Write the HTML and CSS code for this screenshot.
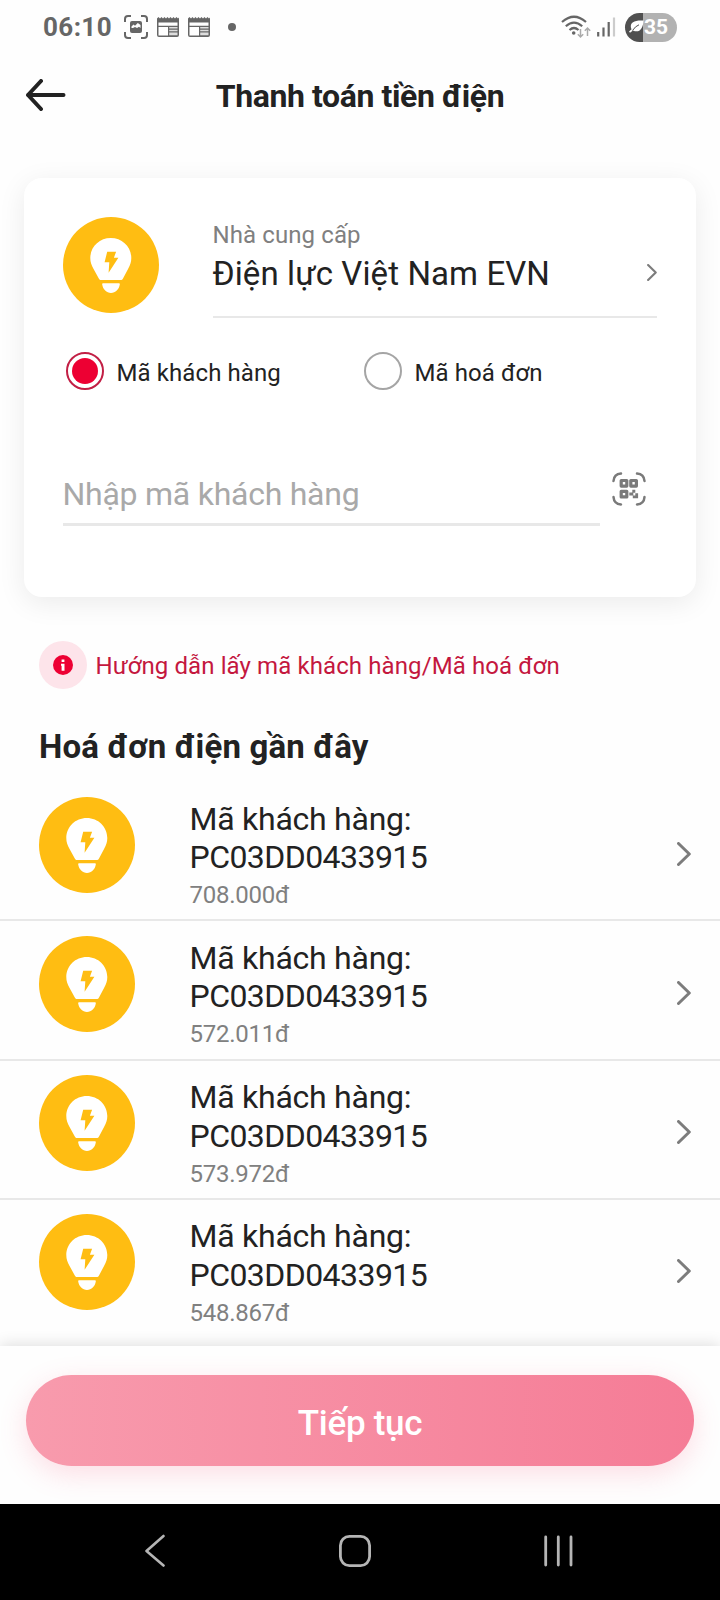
FILE: index.html
```html
<!DOCTYPE html>
<html lang="vi">
<head>
<meta charset="utf-8">
<title>Thanh toán tiền điện</title>
<link rel="stylesheet" href="styles.css">
</head>
<body>
<svg class="defs" width="0" height="0">
  <symbol id="bulb" viewBox="0 0 96 96">
    <circle cx="48" cy="48" r="48" fill="#ffbd12"/>
    <path fill="#fff" d="M47.8 21C36.4 21 27.3 29.8 27.3 41c0 4 1.2 7.400 3 10.500l5.500 10C36.500 62.700 37 63 38.300 63h19.200c1.300 0 1.900-.3 2.500-1.500l5.300-10c1.800-3.100 3-6.500 3-10.500C68.300 29.800 59.200 21 47.800 21z"/>
    <path fill="#fff" d="M40.500 66.200h15c1 0 1.500.5 1.300 1.400-.8 5-4.300 8.400-8.800 8.400s-8-3.400-8.800-8.400c-.2-.9.300-1.400 1.300-1.400z"/>
    <path fill="#ffbd12" d="M44.200 34.700h8.900l-2.200 6h4.500L45.600 55.700l.7-10.400h-4.700z"/>
  </symbol>
  <symbol id="chevron" viewBox="0 0 14 24">
    <path d="M1.500 1.500 12.300 12 1.500 22.500" fill="none" stroke="#7c7c7c" stroke-width="3" stroke-linecap="round" stroke-linejoin="round"/>
  </symbol>
  <symbol id="calendar" viewBox="0 0 22 20">
    <path d="M0 1.500 1.500 0 3 1.500 4.500 0 6 1.500 7.500 0 9 1.500 10.500 0 12 1.500 13.500 0 15 1.500 16.500 0 18 1.500 19.500 0 21 1.500 22 .5V18q0 2-2 2H2q-2 0-2-2z" fill="#666"/>
    <path d="M1.500 5.500h19v3.200h-19zM1.500 10h9.500v8.500H1.500z" fill="#fff"/>
    <path d="M12.200 10h8.300v1.500h-8.300zM12.200 12.800h8.300v1.400h-8.300zM12.200 15.500h8.300v2.700h-8.300z" fill="#ddd"/>
  </symbol>
</svg>
<div class="screen">
  <div class="status">
    <span class="time">06:10</span>
    <svg class="capture" width="24" height="24" viewBox="0 0 24 24">
      <path d="M1 7V4q0-3 3-3h3M17 1h3q3 0 3 3v3M23 17v3q0 3-3 3h-3M7 23H4q-3 0-3-3v-3" fill="none" stroke="#666" stroke-width="2"/>
      <rect x="6" y="6" width="12" height="12" rx="2" fill="#666"/>
      <path d="M7.500 13V11.500L9.500 9.500l1.500 1.300L13.800 8l2.700 2V13l-1.500-1.200-2 1.200-2-1-2 1z" fill="#fff"/>
    </svg>
    <svg class="calendar" width="22" height="20"><use href="#calendar"/></svg>
    <svg class="calendar" width="22" height="20"><use href="#calendar"/></svg>
    <span class="dot"></span>
    <svg class="wifi" width="30" height="24" viewBox="0 0 30 24">
      <g fill="none" stroke="#666" stroke-width="2.200">
        <path d="M1 7Q13-3.500 25 7"/><path d="M4.800 11.300Q13 4 21.200 11.300"/><path d="M8.500 15Q13 11 17.500 15"/>
      </g>
      <circle cx="12.700" cy="18" r="1.800" fill="#666"/>
      <path d="M19.500 14v8M16.800 19.300l2.700 2.700 2.700-2.700M26.500 21v-8M23.800 15.700l2.700-2.700 2.700 2.700" fill="none" stroke="#aaa" stroke-width="1.500"/>
    </svg>
    <svg class="signal" width="19" height="20" viewBox="0 0 19 20">
      <path d="M1.200 15v4.500M6.500 10.500v9M11.700 5v14.500" stroke="#666" stroke-width="2.200"/>
      <path d="M17 .5v19" stroke="#ccc" stroke-width="2.200"/>
    </svg>
    <div class="battery">
      <svg width="15" height="14" viewBox="0 0 15 14"><path d="M14.500.5C5 0 1.800 2.500 1.800 6.500c0 1 .3 2 .8 2.800L0 11.500l1 1.200 3-2.200c6 2.700 10-1 10.500-10z" fill="#fff"/><path d="M3.500 10.500Q6.500 6 10 4.800" fill="none" stroke="#505050" stroke-width="1"/></svg>
      <span>35</span>
    </div>
  </div>

  <header class="header">
    <svg class="back" width="40" height="32" viewBox="0 0 40 32"><path d="M15 2 2 16l13 14M2 16h35.500" fill="none" stroke="#222" stroke-width="4" stroke-linecap="round" stroke-linejoin="round"/></svg>
    <h1>Thanh toán tiền điện</h1>
  </header>

  <section class="card">
    <div class="provider">
      <svg class="bulb" width="96" height="96"><use href="#bulb"/></svg>
      <div class="provider-field">
        <div>
          <div class="label">Nhà cung cấp</div>
          <div class="value">Điện lực Việt Nam EVN</div>
        </div>
        <svg class="provider-arrow" width="10" height="17"><use href="#chevron"/></svg>
      </div>
    </div>
    <div class="radios">
      <div class="option"><span class="radio on"></span><span class="option-text">Mã khách hàng</span></div>
      <div class="option"><span class="radio"></span><span class="option-text">Mã hoá đơn</span></div>
    </div>
    <div class="code">
      <div class="input">Nhập mã khách hàng</div>
      <svg width="34" height="34" viewBox="0 0 34 34">
        <path d="M1.500 9Q2 2 9 1.500M25 1.500q7 .5 7.500 7.500M32.500 25q-.5 7-7.500 7.500M9 32.500Q2 32 1.500 25" fill="none" stroke="#7a7a7a" stroke-width="2.500" stroke-linecap="round"/>
        <g fill="none" stroke="#7a7a7a" stroke-width="3.200" stroke-linejoin="round"><path d="M9.200 8.500h5.600v5.600H9.200zM18.800 8.500h5.600v5.600h-5.600zM9.200 19.300h5.600v5.600H9.200z"/></g>
        <path d="M17.300 20.500h3v-2.700h3v3h-2v2.700h-4zM23.300 21.300h2.800v5h-5.300v-2.700h2.500z" fill="#7a7a7a"/>
      </svg>
    </div>
  </section>

  <div class="guide">
    <span class="guide-icon"><svg width="20" height="20" viewBox="0 0 20 20"><circle cx="10" cy="10" r="10" fill="#ed0033"/><path d="M8.600 4.500h2.800V7H8.600zM8 8.700h3.500v7H8.600v-5H8z" fill="#fff"/></svg></span>
    <span class="guide-text">Hướng dẫn lấy mã khách hàng/Mã hoá đơn</span>
  </div>

  <h2>Hoá đơn điện gần đây</h2>

  <div class="list">
    <div class="row"><svg class="bulb" width="96" height="96"><use href="#bulb"/></svg><div class="bill"><div>Mã khách hàng:</div><div class="bill-code">PC03DD0433915</div><div class="amount">708.000đ</div></div><svg class="row-arrow" width="14" height="24"><use href="#chevron"/></svg></div>
    <div class="row"><svg class="bulb" width="96" height="96"><use href="#bulb"/></svg><div class="bill"><div>Mã khách hàng:</div><div class="bill-code">PC03DD0433915</div><div class="amount">572.011đ</div></div><svg class="row-arrow" width="14" height="24"><use href="#chevron"/></svg></div>
    <div class="row"><svg class="bulb" width="96" height="96"><use href="#bulb"/></svg><div class="bill"><div>Mã khách hàng:</div><div class="bill-code">PC03DD0433915</div><div class="amount">573.972đ</div></div><svg class="row-arrow" width="14" height="24"><use href="#chevron"/></svg></div>
    <div class="row"><svg class="bulb" width="96" height="96"><use href="#bulb"/></svg><div class="bill"><div>Mã khách hàng:</div><div class="bill-code">PC03DD0433915</div><div class="amount">548.867đ</div></div><svg class="row-arrow" width="14" height="24"><use href="#chevron"/></svg></div>
  </div>

  <div class="footer"><div class="button">Tiếp tục</div></div>

  <nav class="nav">
    <svg width="20" height="34" viewBox="0 0 20 34"><path d="M18.500 2 1.500 17l17 14.500" fill="none" stroke="#b5b5b5" stroke-width="2.600" stroke-linecap="round" stroke-linejoin="round"/></svg>
    <svg width="32" height="32" viewBox="0 0 32 32"><rect x="1.400" y="1.400" width="29.200" height="29.200" rx="9" fill="none" stroke="#b5b5b5" stroke-width="2.800"/></svg>
    <svg width="29" height="32" viewBox="0 0 29 32"><path d="M1.700 2v28M14.300 2v28M27 2v28" stroke="#b5b5b5" stroke-width="2.800" stroke-linecap="round"/></svg>
  </nav>
</div>
</body>
</html>
```
FILE: styles.css
```css
* { box-sizing: border-box; }
body { margin: 0; background: #fdfdfd; }
.defs { display: block; height: 0; }
.screen {
  width: 720px;
  height: 1600px;
  overflow: hidden;
  display: flex;
  flex-direction: column;
  background: #fefefe;
  color: #222;
  font-family: Roboto, "Noto Sans", sans-serif;
  white-space: nowrap;
}
svg { display: block; flex: none; }

.status { height: 54px; flex: none; display: flex; align-items: center; padding: 0 43px; }
.time { font-size: 26px; font-weight: 700; line-height: 54px; color: #666; width: 81px; letter-spacing: 0.4px; }
.calendar { margin-left: 9px; }
.dot { width: 8px; height: 8px; border-radius: 50%; background: #666; margin-left: 18px; }
.wifi { margin-left: auto; }
.signal { margin-left: 6px; }
.battery {
  width: 52px; height: 29px; margin-left: 9px; border-radius: 15px;
  background: linear-gradient(90deg, #505050 18px, #b2b2b2 18px);
  display: flex; align-items: center; padding-left: 4px;
  color: #fff; font-size: 21px; font-weight: 700;
}

.header { height: 84px; flex: none; display: flex; align-items: center; padding: 0 26px; }
.header h1 { margin: 0 40px 0 0; flex: 1; text-align: center; font-size: 32px; font-weight: 700; line-height: 40px; letter-spacing: -0.4px; }
.header svg { margin-top: -2px; }

.card {
  height: 419px; flex: none; margin: 40px 24px 0 23.5px; padding: 39px 39px 0;
  border-radius: 18px; background: #fff;
  box-shadow: 0 6px 28px rgba(0, 0, 0, 0.08);
}
.provider { display: flex; gap: 54px; }
.provider-field { flex: 1; height: 101px; border-bottom: 2px solid #e8e8e8; display: flex; justify-content: space-between; }
.label { font-size: 24px; line-height: 30px; margin-top: 3px; color: #808080; letter-spacing: 0.1px; }
.value { font-size: 33px; line-height: 40px; margin-top: 4px; letter-spacing: 0.1px; }
.provider-arrow { margin-top: 47px; }
.radios { display: flex; padding: 34px 0 0 3px; }
.option { display: flex; align-items: center; gap: 13px; width: 298px; height: 38px; flex: none; }
.radio { width: 38px; height: 38px; border: 2px solid #a5a5a5; border-radius: 50%; padding: 4px; background-clip: content-box; }
.radio.on { border-color: #c21f45; background-color: #ed0033; }
.option-text { font-size: 24px; line-height: 38px; padding-top: 3px; letter-spacing: 0.1px; }
.code { display: flex; margin-top: 82px; gap: 12.5px; }
.input { width: 537px; height: 54px; border-bottom: 3px solid #e8e8e8; font-size: 32px; line-height: 44px; color: #a9a9a9; letter-spacing: -0.25px; }

.guide { display: flex; align-items: center; gap: 9px; height: 48px; flex: none; margin: 44px 0 0 38.5px; }
.guide-icon { width: 48px; height: 48px; border-radius: 50%; background: #fde4ea; display: grid; place-items: center; }
.guide-text { font-size: 24px; line-height: 32px; padding-top: 2px; color: #c4173e; letter-spacing: 0.1px; }

h2 { margin: 37px 0 0 39px; height: 56px; flex: none; font-size: 33px; line-height: 42px; font-weight: 700; letter-spacing: 0.15px; }
.list { height: 563.5px; flex: none; overflow: hidden; }
.row { display: flex; height: 139.25px; padding: 14.5px 29px 0 38.5px; border-bottom: 2px solid #e8e8e8; }
.row:last-child { border-bottom: 0; }
.bill { margin-left: 55px; padding-top: 3px; font-size: 32px; line-height: 38px; flex: 1; letter-spacing: -0.25px; }
.bill-code { letter-spacing: -0.55px; padding-top: 0.5px; }
.amount { font-size: 24px; line-height: 30px; margin-top: 4px; color: #808080; }
.row-arrow { margin-top: 45px; }

.footer {
  height: 158px; flex: none; padding: 29px 26px 0; background: #fefefe;
  position: relative; box-shadow: 0 -2px 14px rgba(0, 0, 0, 0.12);
}
.button {
  height: 91px; border-radius: 46px; text-align: center; color: #fff;
  font-size: 35px; font-weight: 500; line-height: 97px; letter-spacing: -0.3px;
  background: linear-gradient(90deg, #f89bad, #f57c96);
  box-shadow: 0 8px 28px rgba(245, 90, 125, 0.2);
}
.nav { position: relative; flex: 1; background: #000; display: flex; align-items: center; justify-content: space-between; padding: 0 147px 2px 145px; }
```
